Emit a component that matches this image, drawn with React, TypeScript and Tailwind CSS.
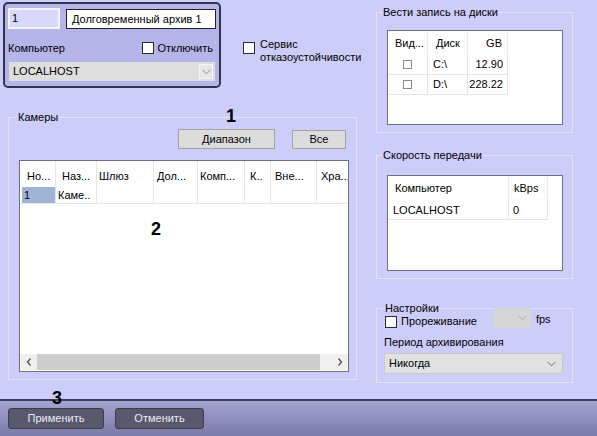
import React from "react";

const Chevron = ({ color = "#6b6b7b" }: { color?: string }) => (
  <svg width="9" height="6" viewBox="0 0 9 6">
    <polyline points="0.5,0.8 4.5,4.8 8.5,0.8" fill="none" stroke={color} strokeWidth="1" />
  </svg>
);

const Box = ({ cls = "" }: { cls?: string }) => (
  <span className={"inline-block w-[12px] h-[12px] bg-white border border-[#2a2a2a] shrink-0 " + cls} />
);

const SmallBox = () => <span className="inline-block w-[9px] h-[9px] bg-white border border-[#8a8a8a]" />;

export default function App() {
  return (
    <div className="relative w-[597px] h-[436px] bg-[#cdcdfa] flex flex-col overflow-hidden font-['Liberation_Sans',sans-serif] text-[11px] leading-[13px] text-black">
      <div className="h-[399px] flex">
        {/* Left column */}
        <div className="w-[370px] flex flex-col">
          <div className="flex items-start">
            <div className="ml-[3px] mt-[2px] w-[218px] h-[86px] bg-[#b5b5ea] border-2 border-[#343452] rounded-[5px] flex flex-col">
              <div className="flex mt-[4px] ml-[3px]">
                <div className="w-[52px] h-[21px] bg-[#d8d8fa] border-2 border-[#f4f4ff] flex items-center pl-[2px]">1</div>
                <div className="ml-[6px] mt-[1px] w-[150px] h-[20px] bg-white border border-[#222] flex items-center pl-[5px]">Долговременный архив 1</div>
              </div>
              <div className="flex items-center mt-[13px] ml-[3px] h-[12px]">
                <span className="flex-1">Компьютер</span>
                <Box />
                <span className="ml-[3px] mr-[6px]">Отключить</span>
              </div>
              <div className="ml-[4px] mt-[8px] w-[206px] h-[19px] bg-[#dedede] flex items-center pl-[4px] pr-[2px]">
                <span className="flex-1">LOCALHOST</span>
                <span className="w-[14px] h-[15px] border border-[#f4f4f4] bg-[#e6e6e6] flex items-center justify-center"><Chevron color="#8a8a9a" /></span>
              </div>
            </div>
            <div className="ml-[22px] mt-[42px] flex items-start">
              <Box />
              <div className="ml-[5px] -mt-[4px] leading-[13px]">Сервис<br />отказоустойчивости</div>
            </div>
          </div>

          <fieldset className="ml-[8px] mt-[22px] w-[349px] h-[270px] border border-[#e2e2fc] flex flex-col">
            <legend className="ml-[8px] px-[1px] leading-[14px]">Камеры</legend>
            <div className="flex justify-end items-start mt-[5px] mr-[10px]">
              <div className="w-[97px] h-[20px] bg-[#dcdcdc] border border-[#a2a2a2] flex items-center justify-center">Диапазон</div>
              <div className="ml-[17px] mt-[1px] w-[54px] h-[19px] bg-[#dcdcdc] border border-[#a2a2a2] flex items-center justify-center">Все</div>
            </div>
            <div className="ml-[10px] mt-[11px] w-[330px] h-[212px] bg-white border border-[#6e6e80] flex flex-col overflow-hidden">
              <div className="flex h-[43px] relative">
                {[
                  [36, 7, "Но...", ""],
                  [41, 6, "Наз...", "Каме.."],
                  [57, 2, "Шлюз", ""],
                  [44, 3, "Дол...", ""],
                  [47, 2, "Комп...", ""],
                  [26, 5, "К..", ""],
                  [46, 4, "Вне...", ""],
                  [30, 4, "Хра...", ""],
                ].map(([w, pl, h, r], i) => (
                  <div key={i} className={"flex flex-col shrink-0 border-[#e6e6e6] " + (i < 7 ? "border-r" : "")} style={{ width: w as number }}>
                    <div className="h-[26px] pt-[9px] whitespace-nowrap" style={{ paddingLeft: pl as number }}>{h}</div>
                    <div className="h-[17px] border-b border-[#e6e6e6] flex items-center whitespace-nowrap">
                      {i === 0 ? (
                        <div className="ml-[2px] w-[33px] h-[16px] bg-[#9fb3d3] flex items-center pl-[2px]">1</div>
                      ) : (
                        <span className="pl-[2px]">{r}</span>
                      )}
                    </div>
                  </div>
                ))}
              </div>
              <div className="flex-1" />
              <div className="h-[16px] mb-[1px] flex">
                <div className="w-[17px] bg-[#f0f0f0] flex items-center justify-center">
                  <svg width="6" height="8" viewBox="0 0 6 8"><polyline points="4.5,0.5 1.5,4 4.5,7.5" fill="none" stroke="#555" strokeWidth="1.4" /></svg>
                </div>
                <div className="w-[283px] bg-[#cdcdcd]" />
                <div className="flex-1 bg-[#f0f0f0]" />
                <div className="w-[17px] bg-[#f0f0f0] flex items-center justify-center">
                  <svg width="6" height="8" viewBox="0 0 6 8"><polyline points="1.5,0.5 4.5,4 1.5,7.5" fill="none" stroke="#555" strokeWidth="1.4" /></svg>
                </div>
              </div>
            </div>
          </fieldset>
        </div>

        {/* Right column */}
        <div className="flex flex-col pl-[6px]">
          <fieldset className="mt-[5px] w-[197px] h-[128px] border border-[#e2e2fc]">
            <legend className="ml-[6px] leading-[14px]">Вести запись на диски</legend>
            <div className="ml-[10px] mt-[11px] w-[176px] h-[95px] bg-white border border-[#6e6e80] flex flex-col">
              <div className="flex h-[24px] items-center">
                <div className="w-[40px] pl-[7px] h-full flex items-center border-r border-[#ececec]">Вид...</div>
                <div className="w-[40px] pl-[8px] h-full flex items-center border-r border-[#ececec]">Диск</div>
                <div className="w-[40px] pr-[5px] h-full flex items-center justify-end border-r border-[#ececec]">GB</div>
              </div>
              {[["C:\\", "12.90"], ["D:\\", "228.22"]].map(([d, g]) => (
                <div key={d} className="flex h-[20px] w-[120px] border-b border-[#e6e6e6]">
                  <div className="w-[40px] flex items-center justify-center border-r border-[#e6e6e6]"><SmallBox /></div>
                  <div className="w-[40px] pl-[5px] flex items-center border-r border-[#e6e6e6]">{d}</div>
                  <div className="w-[40px] pr-[4px] flex items-center justify-end border-r border-[#e6e6e6]">{g}</div>
                </div>
              ))}
            </div>
          </fieldset>

          <fieldset className="mt-[15px] w-[197px] h-[131px] border border-[#e2e2fc]">
            <legend className="ml-[6px] leading-[14px]">Скорость передачи</legend>
            <div className="ml-[10px] mt-[13px] w-[176px] h-[96px] bg-white border border-[#6e6e80] flex flex-col">
              <div className="flex h-[25px]">
                <div className="w-[121px] pl-[7px] flex items-center border-r border-[#ececec]">Компьютер</div>
                <div className="w-[39px] pl-[5px] flex items-center border-r border-[#ececec]">kBps</div>
              </div>
              <div className="flex h-[19px] w-[160px] border-b border-[#e6e6e6]">
                <div className="w-[121px] pl-[5px] flex items-center border-r border-[#e6e6e6]">LOCALHOST</div>
                <div className="w-[39px] pl-[4px] flex items-center border-r border-[#e6e6e6]">0</div>
              </div>
            </div>
          </fieldset>

          <fieldset className="mt-[22px] w-[197px] h-[82px] border border-[#e2e2fc]">
            <legend className="ml-[8px] leading-[14px]">Настройки</legend>
            <div className="flex items-start -mt-[7px] ml-[8px]">
              <Box cls="mt-[8px]" />
              <span className="ml-[4px] mt-[7px]">Прореживание</span>
              <div className="ml-[16px] w-[38px] h-[20px] bg-[#d6d6d6] flex items-center justify-end pr-[4px]"><Chevron color="#aaaaaa" /></div>
              <span className="ml-[5px] mt-[5px]">fps</span>
            </div>
            <div className="ml-[7px] mt-[8px]">Период архивирования</div>
            <div className="ml-[7px] mt-[4px] w-[179px] h-[21px] bg-[#e1e1e1] border border-[#c8c8c8] flex items-center pl-[4px] pr-[6px]">
              <span className="flex-1">Никогда</span>
              <Chevron />
            </div>
          </fieldset>
        </div>
      </div>

      {/* Bottom bar */}
      <div className="flex-1 border-t-2 border-[#3c3c5c] bg-gradient-to-b from-[#a4a4d4] to-[#7a7aa8] flex items-start pt-[7px] pl-[8px] gap-[11px]">
        <div className="w-[96px] h-[21px] bg-[#58586c] border border-[#3c3c4c] rounded-[3px] text-[#ececf4] flex items-center justify-center">Применить</div>
        <div className="w-[89px] h-[21px] bg-[#58586c] border border-[#3c3c4c] rounded-[3px] text-[#ececf4] flex items-center justify-center">Отменить</div>
      </div>

      {/* Annotation numbers */}
      <span className="absolute left-[226px] top-[106px] text-[18px] leading-[20px] font-bold">1</span>
      <span className="absolute left-[151px] top-[219px] text-[18px] leading-[20px] font-bold">2</span>
      <span className="absolute left-[52px] top-[388px] text-[18px] leading-[20px] font-bold">3</span>
    </div>
  );
}
